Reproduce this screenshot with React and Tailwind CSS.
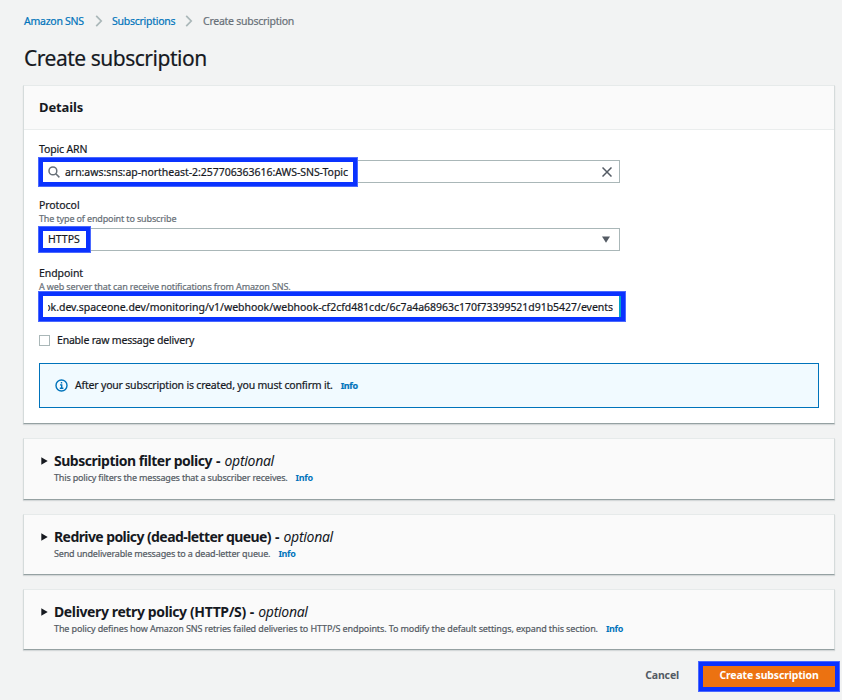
import React from "react";

function Chevron() {
  return (
    <svg width="8" height="12" viewBox="0 0 8 12" fill="none" stroke="#aab7b8" strokeWidth="1.7">
      <path d="M1.2 0.8 L6.2 6 L1.2 11.2" />
    </svg>
  );
}

function Highlight({ className }) {
  return (
    <div className={"pointer-events-none absolute border-[5px] border-[#0a32ff] outline-1 -outline-offset-1 outline-[#4a68ff] " + className} />
  );
}

function Info({ className = "" }) {
  return <a className={"font-bold text-[#0073bb] text-[9px] tracking-[-0.35px] " + className}>Info</a>;
}

const panel =
  "border-x border-[#d5dbdb] border-t border-t-[#e6eaea] border-b border-b-[#95a1a2] shadow-[0_1px_1px_0_rgba(0,28,36,0.12)]";

const ink = "[-webkit-text-stroke:0.2px]";

function PolicyPanel({ title, titleClass, description, descriptionClass, sizeClass }) {
  return (
    <section className={"bg-[#fafafa] pl-[17px] " + panel + " " + sizeClass}>
      <div className="flex h-5 items-center whitespace-nowrap text-[14px]">
        <svg width="7" height="8" viewBox="0 0 7 8" className="mr-[6px] mt-[2px] shrink-0">
          <path d="M0.3 0.3 L6.7 4 L0.3 7.7 Z" fill="#16191f" />
        </svg>
        <h2 className={"font-bold " + titleClass}>{title}</h2>
        <span className="mx-[4px] font-bold">-</span>
        <span className="italic tracking-[-0.3px]">optional</span>
      </div>
      <p className="mt-px flex h-[13px] items-center whitespace-nowrap pl-[13px] text-[9px] text-[#545b64]">
        <span className={ink + " " + descriptionClass}>{description}</span>
        <Info className="ml-[8px]" />
      </p>
    </section>
  );
}

export default function App() {
  return (
    <main className="h-[700px] w-[842px] overflow-hidden bg-[#f2f3f3] pl-[23px] pr-[7px] font-['Noto_Sans',sans-serif] text-[#16191f]">
      <nav className={"flex h-[42px] items-center whitespace-nowrap pl-px text-[10.5px] tracking-[-0.26px] " + ink}>
        <a className="w-[61px] pt-px text-[#0073bb]">Amazon SNS</a>
        <span className="ml-[10px] mr-[9px]"><Chevron /></span>
        <a className="w-[64px] pt-px text-[#0073bb]">Subscriptions</a>
        <span className="ml-[9px] mr-[10px]"><Chevron /></span>
        <span className="pt-px text-[#687078]">Create subscription</span>
      </nav>
      <h1 className={"flex h-[43px] items-center whitespace-nowrap pb-[11px] pl-px text-[21px] leading-[32px] tracking-[-0.48px] " + ink}>
        Create subscription
      </h1>

      <section className={"h-[339px] bg-white " + panel}>
        <header className="flex h-[44px] items-center border-b border-[#eaeded] bg-[#fafafa] pl-[15px]">
          <h2 className="text-[13px] font-bold tracking-[-0.1px]">Details</h2>
        </header>
        <div className={"pl-[15px] pr-[15px] pt-[12px] text-[10.5px] " + ink}>
          <label className="flex h-[15px] items-center tracking-[-0.14px]">Topic ARN</label>
          <div className="relative mt-[3px] flex h-[23px] w-[581px] items-center border border-[#aab7b8] pl-[8px] pr-[7px]">
            <svg width="12" height="12" viewBox="0 0 12 12" fill="none" stroke="#687078" strokeWidth="1.5">
              <circle cx="4.9" cy="4.9" r="3.9" />
              <path d="M7.8 7.8 L11.4 11.4" />
            </svg>
            <span className="ml-[5px] pt-[2px] whitespace-nowrap tracking-[-0.04px]">
              arn:aws:sns:ap-northeast-2:257706363616:AWS-SNS-Topic
            </span>
            <svg width="10" height="10" viewBox="0 0 10 10" stroke="#545b64" strokeWidth="1.5" className="ml-auto">
              <path d="M0.5 0.5 L9.5 9.5 M9.5 0.5 L0.5 9.5" />
            </svg>
            <Highlight className="-left-[2px] -top-[4px] h-[30px] w-[320px]" />
          </div>

          <label className="mt-[15px] flex h-[15px] items-center tracking-[-0.07px]">Protocol</label>
          <p className="flex h-[12px] items-center whitespace-nowrap text-[9px] text-[#687078]">
            <span className="tracking-[-0.14px]">The type of endpoint to subscribe</span>
          </p>
          <div className="relative mt-[3px] flex h-[23px] w-[581px] items-center border border-[#aab7b8] pl-[8px] pr-[9px]">
            <span>HTTPS</span>
            <svg width="8" height="7" viewBox="0 0 8 7" className="ml-auto">
              <path d="M0 0.4 H8 L4 6.8 Z" fill="#545b64" />
            </svg>
            <Highlight className="-left-[2px] -top-[3px] h-[27px] w-[53px]" />
          </div>

          <label className="mt-[15px] flex h-[15px] items-center tracking-[-0.07px]">Endpoint</label>
          <p className="flex h-[12px] items-center whitespace-nowrap text-[9px] text-[#687078]">
            <span className="tracking-[-0.13px]">A web server that can receive notifications from Amazon SNS.</span>
          </p>
          <div className="relative mt-[3px] flex h-[23px] w-[582px] items-center border-x-2 border-[#00a1c9] pl-[7px] pr-[6px]">
            <div className="flex w-[567px] justify-end overflow-hidden whitespace-nowrap">
              <span className="tracking-[-0.03px]">
                ok.dev.spaceone.dev/monitoring/v1/webhook/webhook-cf2cfd481cdc/6c7a4a68963c170f73399521d91b5427/events
              </span>
            </div>
            <Highlight className="-left-[3px] -top-[5px] h-[31px] w-[588px]" />
          </div>

          <label className="mt-[13px] flex h-[16px] items-center">
            <span className="mr-[7px] h-[11px] w-[11px] border border-[#aab7b8] bg-white" />
            <span className="pt-px tracking-[-0.2px]">Enable raw message delivery</span>
          </label>

          <div className="mt-[15px] flex h-[45px] items-center whitespace-nowrap border border-[#0073bb] bg-[#f1faff] pl-[15px]">
            <svg width="13" height="13" viewBox="0 0 13 13" fill="none" stroke="#0073bb" strokeWidth="1.4">
              <circle cx="6.5" cy="6.5" r="5.5" />
              <path d="M6.5 3 V4.4 M5 5.9 H6.7 V9 M4.8 9.2 H8.4" />
            </svg>
            <span className="ml-[7px] tracking-[-0.19px]">After your subscription is created, you must confirm it.</span>
            <Info className="ml-[8px]" />
          </div>
        </div>
      </section>

      <div className="mt-[14px] flex flex-col gap-[14px]">
        <PolicyPanel sizeClass="h-[62px] pt-[11px]" title="Subscription filter policy" titleClass="tracking-[-0.47px]"
          description="This policy filters the messages that a subscriber receives." descriptionClass="tracking-[-0.17px]" />
        <PolicyPanel sizeClass="h-[61px] pt-[11px]" title="Redrive policy (dead-letter queue)" titleClass="tracking-[-0.58px]"
          description="Send undeliverable messages to a dead-letter queue." descriptionClass="tracking-[-0.16px]" />
        <PolicyPanel sizeClass="h-[61px] pt-[11px]" title="Delivery retry policy (HTTP/S)" titleClass="tracking-[-0.38px]"
          description="The policy defines how Amazon SNS retries failed deliveries to HTTP/S endpoints. To modify the default settings, expand this section." descriptionClass="tracking-[-0.11px]" />
      </div>

      <footer className="mt-[16px] flex h-[21px] items-center justify-end text-[10.5px] font-bold">
        <button className="mr-[24px] tracking-[-0.15px] pb-px text-[#545b64]">Cancel</button>
        <div className="relative flex h-[21px] w-[132px] items-center justify-center bg-[#ec7211]">
          <button className="whitespace-nowrap pb-px tracking-[-0.17px] text-white">Create subscription</button>
          <Highlight className="-left-[5px] -top-[5px] h-[31px] w-[142px]" />
        </div>
      </footer>
    </main>
  );
}
